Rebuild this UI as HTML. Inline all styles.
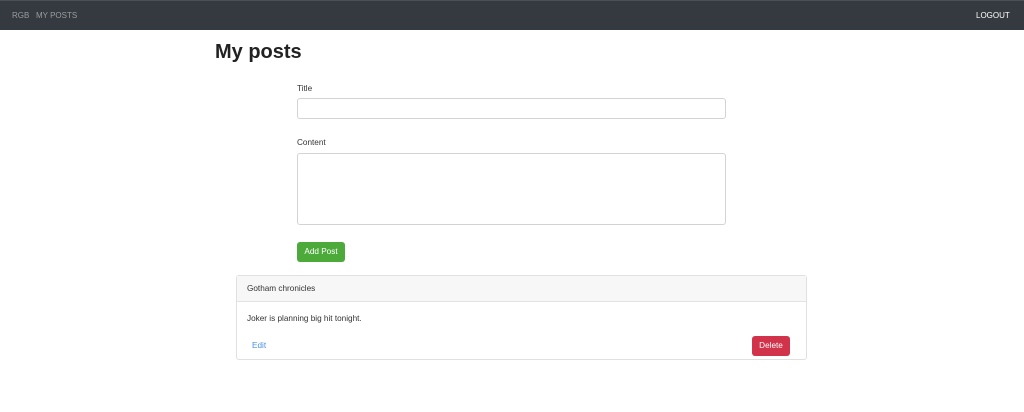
<!DOCTYPE html>
<html><head><style>
body{margin:0;width:1024px;height:412px;background:#fff;font-family:"Liberation Sans",sans-serif;position:relative;overflow:hidden;color:#212529}
.a{position:absolute}
.nav{left:0;top:0;width:1024px;height:30px;background:#343a40;border-top:1px solid #4a5056;box-sizing:border-box}
.nt{font-size:8px;top:11px;color:#9a9da0}
.lbl{font-size:8.2px;color:#333}
.inp{border:1px solid #d0d4d8;border-radius:3px;box-sizing:border-box;background:#fff}
</style></head><body>
<div class="a nav"></div>
<div class="a nt" style="left:12px">RGB</div>
<div class="a nt" style="left:36px">MY POSTS</div>
<div class="a nt" style="left:976px;color:#fff">LOGOUT</div>
<div class="a" style="left:215px;top:41px;font-size:20px;font-weight:bold;color:#222">My posts</div>
<div class="a lbl" style="left:297px;top:84px">Title</div>
<div class="a inp" style="left:297px;top:98px;width:429px;height:21px"></div>
<div class="a lbl" style="left:297px;top:138px">Content</div>
<div class="a inp" style="left:297px;top:153px;width:429px;height:72px"></div>
<div class="a" style="left:297px;top:242px;width:48px;height:20px;background:#4caa3a;border-radius:3px;color:#fff;font-size:8.2px;line-height:20px;text-align:center">Add Post</div>
<div class="a" style="left:236px;top:275px;width:571px;height:85px;border:1px solid #e0e0e0;border-radius:3px;box-sizing:border-box"></div>
<div class="a" style="left:237px;top:276px;width:569px;height:25px;background:#f7f7f7;border-bottom:1px solid #e3e3e3"></div>
<div class="a lbl" style="left:247px;top:284px">Gotham chronicles</div>
<div class="a lbl" style="left:247px;top:314px">Joker is planning big hit tonight.</div>
<div class="a lbl" style="left:252px;top:341px;color:#4a8fe8">Edit</div>
<div class="a" style="left:752px;top:336px;width:38px;height:20px;background:#d1334a;border-radius:3px;color:#fff;font-size:8.2px;line-height:20px;text-align:center">Delete</div>
</body></html>
